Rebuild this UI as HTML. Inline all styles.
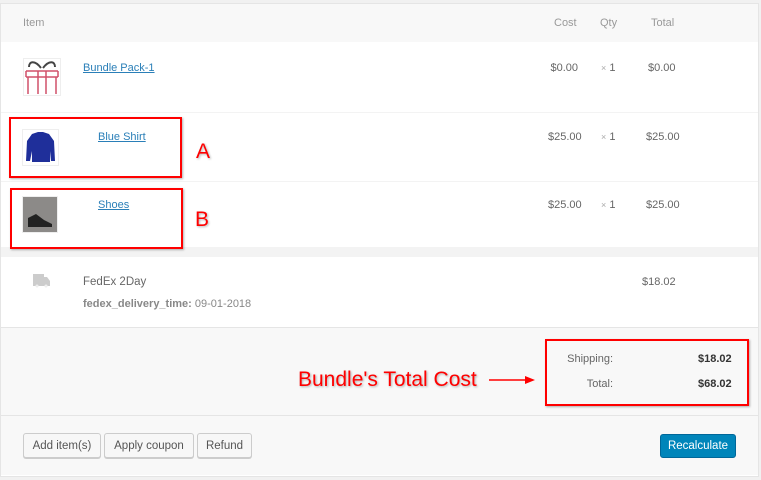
<!DOCTYPE html>
<html><head><meta charset="utf-8"><style>
*{margin:0;padding:0;box-sizing:border-box}
body{width:761px;height:480px;background:#f1f1f1;font-family:"Liberation Sans",sans-serif;font-size:11px;color:#666;position:relative;overflow:hidden}
.a{position:absolute}
.panel{position:absolute;left:0;top:3px;width:759px;height:474px;background:#fff;border:1px solid #e5e5e5}
.lnk{color:#2a7fb8;text-decoration:underline}
.r{text-align:right}
.btn{position:absolute;top:433px;height:25px;border:1px solid #ccc;border-radius:3px;background:#f7f7f7;color:#555;font-size:11.5px;line-height:25px;text-align:center;box-shadow:0 1px 0 #ccc}
.box{position:absolute;border:2px solid #f00;box-shadow:1px 1px 2px rgba(0,0,0,.3)}
.big{position:absolute;color:#f00;font-size:21px;text-shadow:1px 1px 2px rgba(0,0,0,.3)}
</style></head><body>
<div class="panel"></div>
<div class="a" style="left:1px;top:4px;width:757px;height:38px;background:#f8f8f8"></div>
<div class="a" style="left:23px;top:17px;color:#999">Item</div>
<div class="a" style="left:554px;top:17px;color:#999">Cost</div>
<div class="a" style="left:600px;top:17px;color:#999">Qty</div>
<div class="a" style="left:651px;top:17px;color:#999">Total</div>

<div class="a" style="left:1px;top:112px;width:757px;height:1px;background:#f3f3f3"></div>
<div class="a" style="left:1px;top:181px;width:757px;height:1px;background:#f3f3f3"></div>
<div class="a" style="left:1px;top:247px;width:757px;height:10px;background:#f3f3f3"></div>
<div class="a" style="left:1px;top:327px;width:757px;height:148px;background:#f8f8f8;border-top:1px solid #e5e5e5"></div>
<div class="a" style="left:1px;top:415px;width:757px;height:1px;background:#e5e5e5"></div>

<svg class="a" style="left:23px;top:58px" width="38" height="38" viewBox="0 0 38 38">
<rect x="0.5" y="0.5" width="37" height="37" fill="#fff" stroke="#eee"/>
<path d="M18 10 C12 2 6 3 6 9 M20 10 C26 2 32 3 32 9" stroke="#444" stroke-width="2" fill="none"/>
<path d="M3 13 H35 M3 19 H35 M3 13 V19 M35 13 V19 M5 19 V36 M33 19 V36 M15 13 V36 M23 13 V36" stroke="#d0506a" stroke-width="1.5" fill="none"/>
</svg>
<div class="a lnk" style="left:83px;top:62px">Bundle Pack-1</div>
<div class="a r" style="left:540px;top:62px;width:38px">$0.00</div>
<div class="a" style="left:601px;top:62px"><span style="color:#aaa;font-size:9px">×</span>&nbsp;1</div>
<div class="a" style="left:648px;top:62px">$0.00</div>

<svg class="a" style="left:22px;top:129px" width="37" height="37"><rect x="0.5" y="0.5" width="36" height="36" fill="#fff" stroke="#eee"/><path d="M10 5 L16 3 L21 3 L27 5 L32 12 L33 32 L29 32 L28 22 L28 33 L10 33 L10 22 L8 32 L4 32 L5 12Z" fill="#1f2f9a"/></svg>
<div class="a lnk" style="left:98px;top:131px">Blue Shirt</div>
<div class="a" style="left:548px;top:131px">$25.00</div>
<div class="a" style="left:601px;top:131px"><span style="color:#aaa;font-size:9px">×</span>&nbsp;1</div>
<div class="a" style="left:646px;top:131px">$25.00</div>

<svg class="a" style="left:22px;top:196px" width="36" height="37"><rect x="0.5" y="0.5" width="35" height="36" fill="#8c8a88" stroke="#eee"/><path d="M6 22 L14 18 L22 24 L30 28 L30 31 L6 31Z" fill="#222"/></svg>
<div class="a lnk" style="left:98px;top:199px">Shoes</div>
<div class="a" style="left:548px;top:199px">$25.00</div>
<div class="a" style="left:601px;top:199px"><span style="color:#aaa;font-size:9px">×</span>&nbsp;1</div>
<div class="a" style="left:646px;top:199px">$25.00</div>

<svg class="a" style="left:33px;top:274px" width="18" height="14"><path d="M0 0 H11 V3 H14 L17 7 V12 H0Z" fill="#ccc"/><circle cx="4" cy="12" r="1.5" fill="#eee"/><circle cx="13" cy="12" r="1.5" fill="#eee"/></svg>
<div class="a" style="left:83px;top:276px;font-size:11.5px">FedEx 2Day</div>
<div class="a" style="left:83px;top:298px;color:#888"><b>fedex_delivery_time:</b> 09-01-2018</div>
<div class="a" style="left:642px;top:276px">$18.02</div>

<div class="a r" style="left:540px;top:353px;width:73px">Shipping:</div>
<div class="a" style="left:698px;top:353px;font-weight:bold;color:#333">$18.02</div>
<div class="a r" style="left:540px;top:378px;width:73px">Total:</div>
<div class="a" style="left:698px;top:378px;font-weight:bold;color:#333">$68.02</div>

<div class="btn" style="left:23px;width:78px">Add item(s)</div>
<div class="btn" style="left:104px;width:90px">Apply coupon</div>
<div class="btn" style="left:197px;width:55px">Refund</div>
<div class="a" style="left:660px;top:434px;width:76px;height:24px;background:#0085ba;border:1px solid #006799;border-radius:3px;color:#fff;font-size:11.5px;line-height:23px;text-align:center">Recalculate</div>

<div class="box" style="left:9px;top:117px;width:173px;height:61px"></div>
<div class="box" style="left:10px;top:188px;width:173px;height:61px"></div>
<div class="big" style="left:196px;top:140px">A</div>
<div class="big" style="left:195px;top:208px">B</div>
<div class="box" style="left:545px;top:339px;width:204px;height:67px"></div>
<div class="big" style="left:298px;top:368px">Bundle's Total Cost</div>
<svg class="a" style="left:489px;top:375px" width="48" height="10"><path d="M0 5 H38" stroke="#f00" stroke-width="1.5"/><path d="M36 1 L46 5 L36 9Z" fill="#f00"/></svg>
</body></html>
